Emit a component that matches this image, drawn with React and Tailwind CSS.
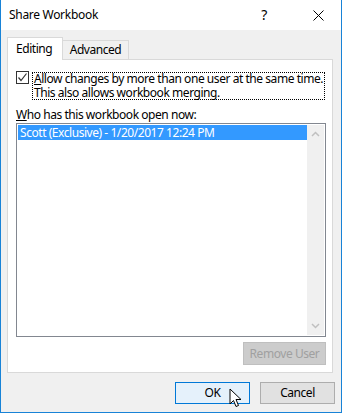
import React from "react";

export default function App() {
  const font = { fontFamily: '"Noto Sans", "Segoe UI", sans-serif' };
  return (
    <div
      className="w-[342px] h-[413px] flex flex-col border-x border-b border-[#1883d7] bg-[#f0f0f0] text-[12px] tracking-[-0.45px] text-black overflow-hidden whitespace-nowrap"
      style={font}
    >
      {/* title bar */}
      <div className="h-[30px] bg-white flex items-center shrink-0">
        <span className="ml-[8px] text-[12px] leading-none tracking-[-0.3px]">Share Workbook</span>
        <span className="ml-auto mr-[46px] text-[14px] leading-none">?</span>
        <svg width="11" height="11" viewBox="0 0 11 11" className="mr-[17px]">
          <path d="M0.5 0.5 L10.5 10.5 M10.5 0.5 L0.5 10.5" stroke="#000" strokeWidth="1" />
        </svg>
      </div>

      {/* tabs */}
      <div className="flex items-end h-[29px] pl-[6px] shrink-0">
        <div className="w-[56px] h-[23px] bg-white border-x border-t border-[#d9d9d9] flex items-center pl-[8px] relative z-10 translate-y-[1px]">
          <span className="leading-none">Editing</span>
        </div>
        <div className="h-[19px] w-[66px] bg-[#f0f0f0] border-r border-t border-[#d9d9d9] flex items-center justify-center">
          <span className="leading-none">Advanced</span>
        </div>
      </div>

      {/* panel */}
      <div className="ml-[6px] w-[326px] h-[314px] bg-white border border-[#d9d9d9] flex flex-col shrink-0">
        <div className="flex mt-[11px] ml-[8px]">
          <div className="w-[13px] h-[13px] border border-[#333] bg-white flex items-center justify-center shrink-0">
            <svg width="11" height="11" viewBox="0 0 11 11">
              <path d="M1.5 5.5 L4 8.5 L9.5 1.5" fill="none" stroke="#333" strokeWidth="1.2" />
            </svg>
          </div>
          <div className="ml-[3px] mt-[1px] w-[293px] h-[28px] border border-dotted border-black pl-[1px] leading-[14px]">
            <div className="-mt-[1px]"><span className="underline">A</span>llow changes by more than one user at the same time.</div>
            <div>This also allows workbook merging.</div>
          </div>
        </div>

        <div className="ml-[8px] mt-[7px] leading-[16px]">
          <span className="underline">W</span>ho has this workbook open now:
        </div>

        <div className="ml-[8px] w-[310px] h-[214px] border border-[#828790] flex p-[1px]">
          <div className="flex-1">
            <div className="h-[15px] bg-[#3399ff] text-white leading-[15px] pl-[2px]">
              Scott (Exclusive) - 1/20/2017 12:24 PM
            </div>
          </div>
          <div className="w-[17px] bg-[#f0f0f0] flex flex-col items-center justify-between py-[6px]">
            <svg width="9" height="6" viewBox="0 0 9 6">
              <path d="M1 5 L4.5 1.5 L8 5" fill="none" stroke="#c0c0c0" strokeWidth="1.5" />
            </svg>
            <svg width="9" height="6" viewBox="0 0 9 6">
              <path d="M1 1 L4.5 4.5 L8 1" fill="none" stroke="#c0c0c0" strokeWidth="1.5" />
            </svg>
          </div>
        </div>

        <div className="flex justify-end mr-[6px] mt-[5px]">
          <div className="w-[83px] h-[23px] bg-[#cccccc] border border-[#bfbfbf] flex items-center justify-center text-[#a0a0a0]">
            Remove User
          </div>
        </div>
      </div>

      {/* buttons */}
      <div className="flex justify-end gap-[10px] mr-[6px] mt-[9px] relative">
        <div className="w-[75px] h-[22px] bg-[#e5f1fb] border border-[#0078d7] flex items-center justify-center">
          OK
        </div>
        <div className="w-[75px] h-[22px] bg-[#e1e1e1] border border-[#adadad] flex items-center justify-center">
          Cancel
        </div>
        <svg
          className="absolute left-[228px] top-[6px]"
          width="16"
          height="22"
          viewBox="0 0 16 22"
        >
          <path
            d="M1 1 L1 16 L4.5 12.5 L7 18.5 L9.5 17.5 L7 11.5 L12 11.5 Z"
            fill="#fff"
            stroke="#000"
            strokeWidth="1"
            strokeLinejoin="round"
          />
        </svg>
      </div>
    </div>
  );
}
